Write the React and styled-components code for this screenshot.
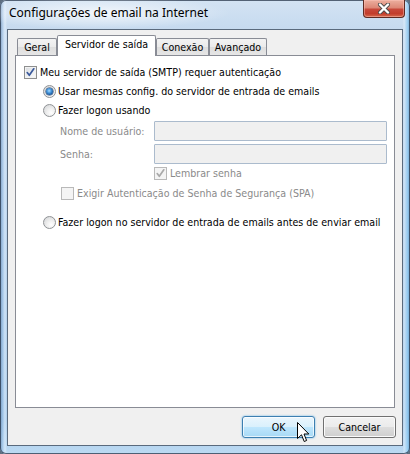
import React from "react";
import styled, { createGlobalStyle } from "styled-components";

const UI_FONT = `"DejaVu Sans Condensed", "DejaVu Sans", sans-serif`;
const TITLE_FONT = `"Noto Sans", "Open Sans", sans-serif`;

const GlobalStyle = createGlobalStyle`
  html, body {
    margin: 0;
    padding: 0;
    width: 410px;
    height: 454px;
    overflow: hidden;
    background: #5d6e80;
  }
  * { box-sizing: border-box; }
`;

const Window = styled.div`
  position: relative;
  width: 410px;
  height: 454px;
  display: flex;
  flex-direction: column;
  padding-bottom: 8px;
  border-radius: 6px 6px 6px 6px;
  box-shadow: inset 0 0 0 1px rgba(40, 55, 75, 0.75);
  background:
    linear-gradient(90deg,
      rgba(70, 110, 160, 0.55) 0px,
      rgba(140, 185, 230, 0.2) 3px,
      rgba(235, 245, 255, 0.55) 5px,
      rgba(255, 255, 255, 0) 7px,
      rgba(255, 255, 255, 0) 403px,
      rgba(235, 245, 255, 0.5) 404px,
      rgba(110, 190, 240, 0.55) 408px,
      rgba(60, 100, 150, 0.6) 410px),
    linear-gradient(180deg, #d3e3f3 0px, #c6daef 29px, #b7d1ec 200px, #a9cbea 420px, #bcdaf3 454px);
`;

const TitleBar = styled.div`
  height: 29px;
  flex: none;
  display: flex;
  justify-content: space-between;
  align-items: flex-start;
  padding-left: 9px;
  padding-right: 5px;
  background: radial-gradient(ellipse 130px 16px at 100px 13px, rgba(255, 255, 255, 0.75), rgba(255, 255, 255, 0));
`;

const Title = styled.div`
  font-family: ${TITLE_FONT};
  font-size: 12px;
  line-height: 16px;
  margin-top: 5px;
  color: #000;
  white-space: nowrap;
`;

const CloseButton = styled.div`
  width: 42px;
  height: 18px;
  border: 1px solid #5e2a22;
  border-top: none;
  border-radius: 0 0 4px 4px;
  display: flex;
  align-items: center;
  justify-content: center;
  background: linear-gradient(180deg, #ecaf9f 0%, #dd8877 45%, #c7483a 55%, #c23d2c 80%, #d66a4c 100%);
  box-shadow: inset 0 0 0 1px rgba(255, 200, 190, 0.45);
`;

const Body = styled.div`
  flex: 1;
  margin: 0 7px;
  border: 1px solid #5a6a7d;
  background: #f0f0f0;
  padding: 5px 7px 7px 7px;
  display: flex;
  flex-direction: column;
  font-family: ${UI_FONT};
  font-size: 10.6px;
  color: #000;
`;

const TabStrip = styled.div`
  height: 20px;
  flex: none;
  display: flex;
  align-items: flex-end;
  padding-left: 2px;
  position: relative;
  z-index: 1;
`;

const Tab = styled.div`
  width: ${(p) => p.$w}px;
  height: ${(p) => (p.$active ? 21 : 17)}px;
  margin-bottom: ${(p) => (p.$active ? -1 : 0)}px;
  border: 1px solid #898c95;
  border-bottom: none;
  border-radius: 2px 2px 0 0;
  display: flex;
  justify-content: center;
  align-items: flex-start;
  padding-top: ${(p) => (p.$active ? 2 : 2)}px;
  line-height: 13px;
  white-space: nowrap;
  background: ${(p) =>
    p.$active ? "#ffffff" : "linear-gradient(180deg, #f3f3f3 0%, #ebebeb 50%, #dedede 51%, #e6e6e6 100%)"};
`;

const Panel = styled.div`
  height: 353px;
  flex: none;
  border: 1px solid #898c95;
  background: #fff;
  padding: 10px 0 0 8px;
  display: flex;
  flex-direction: column;
`;

const Row = styled.div`
  display: flex;
  align-items: center;
  height: ${(p) => p.$h || 13}px;
  margin-top: ${(p) => p.$mt || 0}px;
  margin-left: ${(p) => p.$indent || 0}px;
  gap: ${(p) => p.$gap ?? 3}px;
  line-height: 13px;
  white-space: nowrap;
  color: ${(p) => (p.$disabled ? "#8a8a8a" : "#000")};
`;

const FieldLabel = styled.span`
  width: 94px;
  flex: none;
`;

const TextBox = styled.div`
  width: 233px;
  height: 20px;
  border: 1px solid #abbbcd;
  border-radius: 1px;
  background: #f0f0f0;
`;

const Box = styled.span`
  width: 13px;
  height: 13px;
  flex: none;
  border: 1px solid ${(p) => (p.$disabled ? "#b9b9b9" : "#8e8f8f")};
  background: ${(p) =>
    p.$disabled
      ? "#f4f4f4"
      : "linear-gradient(135deg, #d5d8dc 0%, #eceef0 50%, #fbfbfb 100%)"};
  box-shadow: inset 0 0 0 1px ${(p) => (p.$disabled ? "#f4f4f4" : "#f2f2f2")};
  display: flex;
  align-items: center;
  justify-content: center;
`;

const Radio = styled.span`
  width: 13px;
  height: 13px;
  flex: none;
  border-radius: 50%;
  border: 1px solid #8f9295;
  background: radial-gradient(circle at 65% 70%, #ffffff 0%, #f1f1f1 35%, #d0d2d4 100%);
  display: flex;
  align-items: center;
  justify-content: center;
`;

const RadioDot = styled.span`
  width: 7px;
  height: 7px;
  border-radius: 50%;
  background: radial-gradient(circle at 45% 40%, #a9dcff 0%, #4a9be0 35%, #124e92 75%, #0d3a70 100%);
  box-shadow: 0 0 0 0.5px #1c3c66;
`;

const ButtonRow = styled.div`
  margin-top: 8px;
  margin-right: -1px;
  display: flex;
  justify-content: flex-end;
  gap: 8px;
`;

const Button = styled.div`
  position: relative;
  width: 73px;
  height: 22px;
  border-radius: 3px;
  border: 1px solid ${(p) => (p.$hot ? "#3c7fb1" : "#707070")};
  display: flex;
  align-items: center;
  justify-content: center;
  line-height: 13px;
  box-shadow: inset 0 0 0 1px ${(p) => (p.$hot ? "rgba(255,255,255,0.7)" : "#fbfbfb")}
    ${(p) => (p.$hot ? ", 0 0 2px rgba(60,160,230,0.8)" : "")};
  background: ${(p) =>
    p.$hot
      ? "linear-gradient(180deg, #eaf6fd 0%, #d9f0fc 50%, #bee6fd 51%, #a7d9f5 100%)"
      : "linear-gradient(180deg, #f2f2f2 0%, #ebebeb 50%, #dddddd 51%, #cfcfcf 100%)"};
`;

const Cursor = styled.svg`
  position: absolute;
  left: 54px;
  top: 5px;
  pointer-events: none;
  overflow: visible;
`;

function CheckBox({ checked, disabled }) {
  return (
    <Box $disabled={disabled}>
      {checked && (
        <svg width="11" height="11" viewBox="0 0 11 11">
          <path
            d="M2.2 5.6 L4.3 8.3 L8.8 1.8"
            fill="none"
            stroke={disabled ? "#a9a9a9" : "#3b5a9c"}
            strokeWidth="1.7"
            strokeLinecap="round"
            strokeLinejoin="round"
          />
        </svg>
      )}
    </Box>
  );
}

function RadioButton({ checked }) {
  return <Radio>{checked && <RadioDot />}</Radio>;
}

export default function App() {
  return (
    <>
      <GlobalStyle />
      <Window>
        <TitleBar>
          <Title>Configurações de email na Internet</Title>
          <CloseButton>
            <svg width="14" height="11" viewBox="0 0 14 11">
              <path
                d="M3 1.5 L11 9.5 M11 1.5 L3 9.5"
                stroke="#4a4a4a"
                strokeWidth="4"
                strokeLinecap="round"
              />
              <path
                d="M3 1.5 L11 9.5 M11 1.5 L3 9.5"
                stroke="#ffffff"
                strokeWidth="2.4"
                strokeLinecap="round"
              />
            </svg>
          </CloseButton>
        </TitleBar>
        <Body>
          <TabStrip>
            <Tab $w={40}>Geral</Tab>
            <Tab $w={99} $active>
              Servidor de saída
            </Tab>
            <Tab $w={53}>Conexão</Tab>
            <Tab $w={58}>Avançado</Tab>
          </TabStrip>
          <Panel>
            <Row>
              <CheckBox checked />
              <span>Meu servidor de saída (SMTP) requer autenticação</span>
            </Row>
            <Row $mt={6} $indent={19} $gap={2}>
              <RadioButton checked />
              <span>Usar mesmas config. do servidor de entrada de emails</span>
            </Row>
            <Row $mt={6} $indent={19} $gap={2}>
              <RadioButton />
              <span>Fazer logon usando</span>
            </Row>
            <Row $mt={4} $indent={36} $h={20} $gap={0} $disabled>
              <FieldLabel>Nome de usuário:</FieldLabel>
              <TextBox />
            </Row>
            <Row $mt={3} $indent={36} $h={20} $gap={0} $disabled>
              <FieldLabel>Senha:</FieldLabel>
              <TextBox />
            </Row>
            <Row $mt={3} $indent={130} $disabled>
              <CheckBox checked disabled />
              <span>Lembrar senha</span>
            </Row>
            <Row $mt={7} $indent={37} $disabled>
              <CheckBox disabled />
              <span>Exigir Autenticação de Senha de Segurança (SPA)</span>
            </Row>
            <Row $mt={16} $indent={19} $gap={2}>
              <RadioButton />
              <span>Fazer logon no servidor de entrada de emails antes de enviar email</span>
            </Row>
          </Panel>
          <ButtonRow>
            <Button $hot>
              OK
              <Cursor width="13" height="21" viewBox="0 0 13 21">
                <path
                  d="M0.5 0.5 L0.5 16.5 L4.5 12.8 L7.2 19.5 L9.6 18.5 L7 12 L11.8 12 Z"
                  fill="#ffffff"
                  stroke="#000000"
                  strokeWidth="1"
                  strokeLinejoin="miter"
                />
              </Cursor>
            </Button>
            <Button>Cancelar</Button>
          </ButtonRow>
        </Body>
      </Window>
    </>
  );
}
